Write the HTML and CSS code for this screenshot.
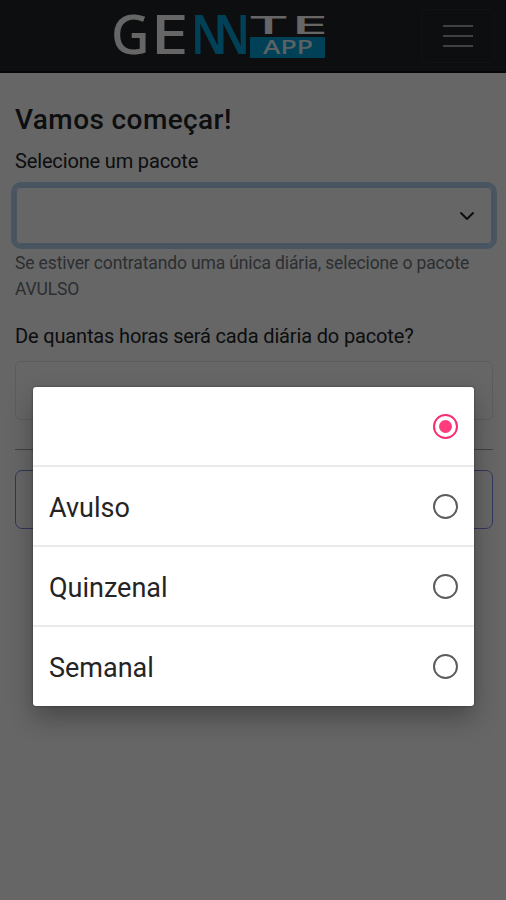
FILE: index.html
```html
<!DOCTYPE html>
<html lang="pt-BR">
<head>
<meta charset="utf-8">
<meta name="viewport" content="width=device-width, initial-scale=1">
<title>Gennte App</title>
<link rel="stylesheet" href="styles.css">
</head>
<body>
<header class="navbar">
  <svg class="logo" width="214" height="48" viewBox="0 0 214 48" role="img" aria-label="Gennte App">
    <g class="logo-light logo-medium">
      <text x="-2" y="43" font-size="54" textLength="38.5" lengthAdjust="spacingAndGlyphs">G</text>
      <text x="37.5" y="43" font-size="54" textLength="38" lengthAdjust="spacingAndGlyphs">E</text>
    </g>
    <g class="logo-blue">
      <text x="78" y="43" font-size="54" textLength="36" lengthAdjust="spacingAndGlyphs">N</text>
      <text x="101" y="43" font-size="54" textLength="36" lengthAdjust="spacingAndGlyphs">N</text>
    </g>
    <g class="logo-light logo-medium">
      <text x="137" y="23" font-size="26" textLength="37" lengthAdjust="spacingAndGlyphs">T</text>
      <text x="178" y="23" font-size="26" textLength="37" lengthAdjust="spacingAndGlyphs">E</text>
    </g>
    <rect class="logo-box" x="137" y="26" width="75" height="21"/>
    <text class="logo-app" x="150" y="43" font-size="19" textLength="50" lengthAdjust="spacingAndGlyphs">APP</text>
  </svg>
  <button class="toggler" aria-label="Menu">
    <span class="bar"></span><span class="bar"></span><span class="bar"></span>
  </button>
</header>
<main class="content">
  <h1 class="title">Vamos começar!</h1>
  <label class="label">Selecione um pacote</label>
  <div class="select focused">
    <svg width="16" height="16" viewBox="0 0 16 16"><path d="M2 5l6 6 6-6" fill="none" stroke="#212529" stroke-width="2" stroke-linecap="round" stroke-linejoin="round"/></svg>
  </div>
  <p class="hint">Se estiver contratando uma única diária, selecione o pacote AVULSO</p>
  <label class="label hours">De quantas horas será cada diária do pacote?</label>
  <div class="select"></div>
  <hr class="rule">
  <button class="submit" aria-label="Continuar"></button>
</main>
<div class="scrim">
  <ul class="dialog">
    <li class="option"><span></span><i class="radio checked"></i></li>
    <li class="option"><span class="name">Avulso</span><i class="radio"></i></li>
    <li class="option"><span class="name">Quinzenal</span><i class="radio"></i></li>
    <li class="option"><span class="name">Semanal</span><i class="radio"></i></li>
  </ul>
</div>
</body>
</html>
```
FILE: styles.css
```css
* { box-sizing: border-box; }

body {
  margin: 0;
  height: 900px;
  overflow: hidden;
  background: #fff;
  color: #212529;
  font-family: Roboto, "Liberation Sans", sans-serif;
}

.navbar {
  display: flex;
  justify-content: space-between;
  height: 73px;
  padding: 9px 11px 0 113px;
  background: #212529;
  border-bottom: 2px solid #101315;
}

.logo {
  margin-top: 2px;
  overflow: visible;
  font-family: "Noto Sans", "Open Sans", sans-serif;
  font-weight: 600;
}

.logo-light { fill: #fff; }
.logo-medium { font-weight: 500; }
.logo-blue { fill: #04a4dc; }
.logo-box { fill: #04a4dc; }
.logo-app { fill: #e4f4fb; font-weight: 500; }

.toggler {
  display: flex;
  flex-direction: column;
  align-items: center;
  gap: 8px;
  width: 74px;
  height: 54px;
  padding: 15px 0 0;
  background: none;
  border: 1px solid #2b2f33;
  border-radius: 6px;
}

.bar {
  width: 30px;
  height: 2px;
  background: #a0a2a3;
}

.content {
  display: flex;
  flex-direction: column;
  padding: 29px 13px 0 15px;
}

.title {
  margin: 0;
  font-size: 28px;
  line-height: 36px;
  font-weight: 500;
  letter-spacing: 0.4px;
}

.label {
  margin-top: 10px;
  font-size: 20px;
  line-height: 26px;
  letter-spacing: -0.15px;
}

.select {
  display: flex;
  align-items: center;
  justify-content: flex-end;
  height: 59px;
  margin-top: 12px;
  padding-right: 17px;
  border: 1px solid #e2e5e8;
  border-radius: 6px;
}

.select.focused {
  border-color: #b0cdf2;
  box-shadow: 0 0 0 4px #b8d4f5, inset 0 0 0 1px #b8d4f5;
}

.hint {
  margin: 5px 0 0;
  color: #6c757d;
  font-size: 17.5px;
  line-height: 26px;
  letter-spacing: -0.13px;
}

.hours { margin-top: 21px; }

.rule {
  width: 100%;
  height: 1px;
  margin: 29px 0 20px;
  border: 0;
  background: #a0a2a5;
}

.submit {
  height: 59px;
  background: none;
  border: 1px solid #7c88e0;
  border-radius: 7px;
}

.scrim {
  position: absolute;
  inset: 0;
  padding: 387px 32px 0 33px;
  background: rgba(0, 0, 0, 0.6);
}

.dialog {
  margin: 0;
  padding: 0;
  height: 319px;
  list-style: none;
  background: #fff;
  border-radius: 3px;
  box-shadow: 0 0 2px rgba(0, 0, 0, 0.5), 0 12px 26px rgba(0, 0, 0, 0.3);
}

.option {
  display: flex;
  align-items: center;
  justify-content: space-between;
  height: 80px;
  padding: 0 16px;
  border-bottom: 2px solid #ebebeb;
  color: #242424;
  font-size: 27px;
}

.option:last-child {
  height: 79px;
  border-bottom: 0;
}

.name { padding-top: 3px; }

.radio {
  display: flex;
  align-items: center;
  justify-content: center;
  width: 25px;
  height: 25px;
  border: 2px solid #5c5c5c;
  border-radius: 50%;
}

.radio.checked { border-color: #f92c70; }

.radio.checked::after {
  content: "";
  width: 13px;
  height: 13px;
  border-radius: 50%;
  background: #ff3c7c;
}
```
